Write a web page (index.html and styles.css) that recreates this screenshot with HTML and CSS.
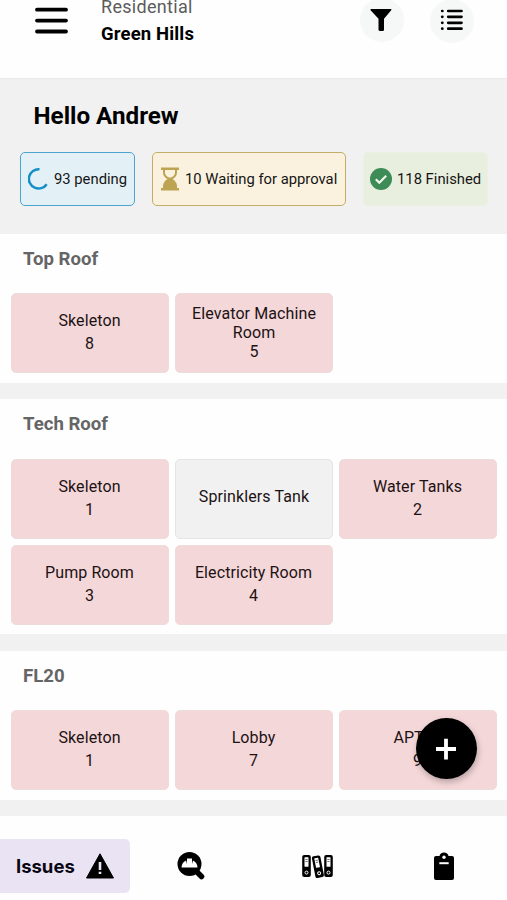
FILE: index.html
```html
<!DOCTYPE html>
<html lang="en">
<head>
<meta charset="utf-8">
<title>Green Hills</title>
<link rel="stylesheet" href="styles.css">
</head>
<body>
<div class="app">
  <header class="header">
    <svg class="menu" width="36" height="30" viewBox="0 0 36 30" stroke="#000" stroke-width="3.8" stroke-linecap="round"><path d="M3 4.7H32M3 15.6H32M3 26.5H32"/></svg>
    <div class="titles">
      <div class="kind">Residential</div>
      <div class="project">Green Hills</div>
    </div>
    <div class="round filter">
      <svg width="44" height="44" viewBox="0 0 44 44"><path d="M11.2 11H30.8Q32 11 31.2 12.3L24 20.8V31.5Q24 33 22.8 33H20Q18.5 33 18.5 31.5V20.800L10.6 12.300Q10 11 11.200 11Z"/></svg>
    </div>
    <div class="round list">
      <svg width="44" height="44" viewBox="0 0 44 44" stroke="#000" stroke-width="2.7" stroke-linecap="round"><path d="M12.2 12H12.4M12.2 17.8H12.4M12.2 23.8H12.4M12.2 29.7H12.4M18.2 12H31.5M18.2 17.8H31.5M18.2 23.8H31.5M18.2 29.7H31.5"/></svg>
    </div>
  </header>

  <section class="hero">
    <h1>Hello Andrew</h1>
    <div class="chips">
      <div class="chip pending">
        <svg width="22" height="24" viewBox="0 0 22 24" fill="none" stroke="#148fc7" stroke-width="2.5"><path d="M11.500 2.2A9.7 9.7 0 1 0 18.700 17.2"/></svg>
        <span>93 pending</span>
      </div>
      <div class="chip waiting">
        <svg width="18" height="24" viewBox="0 0 18 24" fill="#bda452"><path d="M0 .5H18V3H16V6Q15.5 10 11.5 12Q15.5 14.5 16 18.5V21H18V23.5H0V21H2V18.5Q2.5 14.5 6.5 12Q2.5 10 2 6V3H0Z"/><path fill="#faf2df" d="M4 3H14V6Q13.5 9.5 9 10.8Q4.500 9.500 4 6Z"/></svg>
        <span>10 Waiting for approval</span>
      </div>
      <div class="chip finished">
        <svg width="22" height="22" viewBox="0 0 22 22" fill="none"><circle cx="11" cy="11" r="11" fill="#3d8b57"/><path stroke="#f1f7ea" stroke-width="2.2" d="M5.8 11.2L9.300 14.700L16.200 7.800"/></svg>
        <span>118 Finished</span>
      </div>
    </div>
  </section>

  <section class="floor">
    <h2>Top Roof</h2>
    <div class="grid">
      <div class="tile"><span>Skeleton</span><span class="count">8</span></div>
      <div class="tile tall"><span>Elevator Machine Room</span><span class="count">5</span></div>
    </div>
  </section>

  <section class="floor tech">
    <h2>Tech Roof</h2>
    <div class="grid">
      <div class="tile"><span>Skeleton</span><span class="count">1</span></div>
      <div class="tile empty"><span>Sprinklers Tank</span></div>
      <div class="tile"><span>Water Tanks</span><span class="count">2</span></div>
      <div class="tile"><span>Pump Room</span><span class="count">3</span></div>
      <div class="tile"><span>Electricity Room</span><span class="count">4</span></div>
    </div>
  </section>

  <section class="floor">
    <h2>FL20</h2>
    <div class="grid">
      <div class="tile"><span>Skeleton</span><span class="count">1</span></div>
      <div class="tile"><span>Lobby</span><span class="count">7</span></div>
      <div class="tile"><span>APT M</span><span class="count">9</span></div>
    </div>
  </section>

  <nav class="nav">
    <div class="tab active">
      <span>Issues</span>
      <svg width="28" height="26" viewBox="0 0 28 26"><path d="M14 .8L27.500 25H.5Z" stroke="#000" stroke-linejoin="round"/><path d="M12.700 9H15.300V17H12.700ZM12.700 18.700H15.300V21H12.700Z" fill="#e9e3f4"/></svg>
    </div>
    <div class="tab">
      <svg width="28" height="28" viewBox="0 0 28 28"><circle cx="12.500" cy="12" r="12"/><path d="M19.500 19.500L24.500 24.500" stroke="#000" stroke-width="5.500" stroke-linecap="round"/><path fill="#fff" d="M4.500 15.500Q4.700 10.500 9 8.500L10 12V6.500H15V12L16 8.500Q20.300 10.500 20.500 15.500Z"/></svg>
    </div>
    <div class="tab">
      <svg width="31" height="24" viewBox="0 0 31 24">
        <g id="binder"><rect x=".2" y="1" width="8.600" height="22" rx="2"/><rect x="2.500" y="3.200" width="4" height="9.600" rx=".5" fill="#fff"/><path d="M3.300 5.500H5.700M3.300 7.500H5.700" stroke="#555" stroke-width=".8"/><circle cx="4.500" cy="18.600" r="1.500" fill="none" stroke="#fff"/></g>
        <use href="#binder" transform="translate(9.200 1.800) rotate(-11)"/>
        <use href="#binder" x="22"/>
      </svg>
    </div>
    <div class="tab">
      <svg width="20" height="28" viewBox="0 0 20 28"><path d="M2 4H5.500Q6.200 .5 10 .5T14.500 4H18Q20 4 20 6V26Q20 28 18 28H2Q0 28 0 26V6Q0 4 2 4Z"/><circle cx="10" cy="5.300" r="1.700" fill="#fff"/><path d="M5.300 11.200H14.700" stroke="#fff" stroke-width="2"/></svg>
    </div>
  </nav>
  <div class="fab"><svg width="22" height="22" viewBox="0 0 22 22" stroke="#fff" stroke-width="3.800"><path d="M10 .8V21.500M0 11H20"/></svg></div>
</div>
</body>
</html>
```
FILE: styles.css
```css
* { box-sizing: border-box; }
body { margin: 0; background: #fff; color: #151515; font-family: Roboto, sans-serif; }
svg { display: block; flex: none; }
.app { position: relative; width: 507px; height: 900px; overflow: hidden; background: #fefefe; }

.header { display: flex; height: 78px; padding-left: 34px; }
.menu { margin-top: 5px; }
.titles { width: 258px; margin-left: 31px; }
.kind { margin-top: -5px; font-size: 18px; line-height: 24px; letter-spacing: .3px; color: #5c5c5c; }
.project { margin-top: 3px; font-size: 18.5px; line-height: 24px; letter-spacing: .15px; font-weight: 700; color: #000; }
.round { width: 44px; height: 44px; border-radius: 50%; background: #f6f8f8; }
.filter { margin: -2px 0 0 1px; }
.list { margin: -1px 0 0 26px; }

.hero { height: 156px; padding: 22px 19px 0 20px; background: #f1f1f1; border-top: 1px solid #e9e9e9; }
h1 { margin: 0 0 21px 13.5px; font-size: 24.2px; line-height: 30px; font-weight: 700; color: #000; }
.chips { display: flex; justify-content: space-between; }
.chip { display: flex; align-items: center; height: 54px; padding: 0 6px 1px; border: 1.500px solid; border-radius: 5px; font-size: 14.8px; white-space: nowrap; }
.pending { width: 115px; gap: 4px; padding-left: 7px; background: #e3f1f7; border-color: #4ba5ce; }
.waiting { width: 194px; gap: 6px; padding-left: 8px; background: #faf2df; border-color: #c2ae68; }
.finished { width: 125px; gap: 5px; padding-left: 6px; background: #e9efdf; border-color: #ebf0e3; }

.floor { padding: 13px 10px 10px 11px; border-bottom: 16px solid #f1f1f1; }
h2 { margin: 0 0 21px 12px; font-size: 18.6px; line-height: 25px; font-weight: 700; color: #656565; }
.tech { padding-bottom: 9px; border-bottom-width: 17px; }
.tech h2 { margin-bottom: 22px; }
.grid { display: grid; grid-template-columns: repeat(3, 158px); gap: 6px; }
.tile { display: flex; flex-direction: column; align-items: center; justify-content: center; height: 80px; padding: 0 13px 2px 12px; border: 1px solid #eddcda; border-radius: 5px; background: #f4d7d9; font-size: 16px; line-height: 19px; letter-spacing: .1px; text-align: center; color: #1d1213; }
.count { margin-top: 4px; }
.tall { padding: 0 12px 2px; }
.tall .count { margin-top: 0; }
.empty { background: #f1f1f1; border-color: #e5e5e5; padding: 0 12px 5px; }

.nav { display: flex; margin-top: 23px; height: 54px; }
.tab { display: flex; align-items: center; justify-content: center; width: 127px; padding-left: 1px; }
.active { width: 130px; margin-right: -3px; gap: 11px; padding-left: 0; border-radius: 0 5px 5px 0; background: #e9e3f4; font: 700 18.5px Inter, sans-serif; color: #090713; }
.fab { position: absolute; left: 416px; top: 718px; display: flex; align-items: center; justify-content: center; width: 61px; height: 61px; border-radius: 50%; background: #000; box-shadow: 1px 3px 6px rgba(0,0,0,.25); }
```
